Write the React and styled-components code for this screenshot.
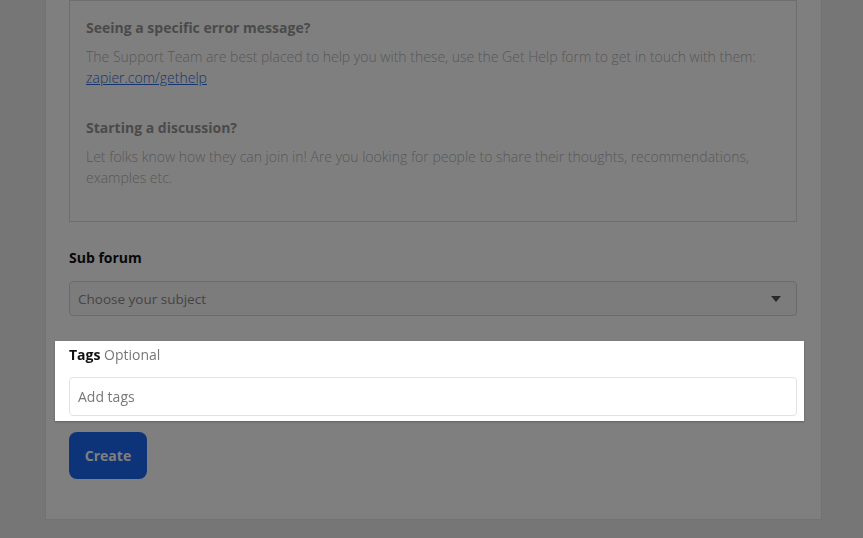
import React from 'react';
import styled, { createGlobalStyle } from 'styled-components';

const GlobalStyle = createGlobalStyle`
  html, body {
    margin: 0;
    padding: 0;
    background: #ececec;
    font-family: "Open Sans", "Liberation Sans", sans-serif;
    overflow: hidden;
  }
`;

const Page = styled.div`
  display: flex;
  padding: 0 41px 17px 45px;
`;

const Card = styled.div`
  flex: 1;
  display: flex;
  flex-direction: column;
  margin-top: -40px;
  padding: 39px 24px 40px 23px;
  background: #fff;
  border: 1px solid #e4e4e4;
`;

const InfoBox = styled.div`
  display: flex;
  flex-direction: column;
  gap: 29px;
  padding: 16px 16px 33px;
  border: 1px solid #dcdcdc;
`;

const InfoSection = styled.div`
  display: flex;
  flex-direction: column;
  gap: 8px;
`;

const InfoTitle = styled.h3`
  margin: 0;
  font-size: 14px;
  line-height: 21px;
  font-weight: 700;
  color: #959595;
`;

const InfoText = styled.p`
  margin: 0;
  font-size: 14px;
  line-height: 21px;
  font-weight: 300;
  color: #b0b0b0;
`;

const Link = styled.a`
  color: #2f6bd8;
  text-decoration: underline;
`;

const Field = styled.div`
  display: flex;
  flex-direction: column;
  gap: ${p => p.$gap || 13}px;
  margin-top: ${p => p.$top || 0}px;
`;

const Spotlight = styled(Field)`
  position: relative;
  z-index: 20;
  margin-left: -14px;
  margin-right: -7px;
  padding: 3px 7px 5px 14px;
  background: #fff;
  box-shadow: 0 1px 2px rgba(0, 0, 0, 0.25);
`;

const Label = styled.label`
  font-size: 14px;
  line-height: 21px;
  font-weight: 700;
  color: #111;
`;

const Hint = styled.span`
  font-weight: 400;
  color: #777;
`;

const Select = styled.div`
  display: flex;
  align-items: center;
  justify-content: space-between;
  height: 35px;
  box-sizing: border-box;
  padding: 0 15px 0 8px;
  border: 1px solid #d6d6d6;
  border-radius: 4px;
  background: #f8f8f8;
  font-size: 13.5px;
  color: #8a8a8a;
`;

const Caret = styled.span`
  width: 0;
  height: 0;
  border-left: 5px solid transparent;
  border-right: 5px solid transparent;
  border-top: 6px solid #555;
`;

const Input = styled.div`
  display: flex;
  align-items: center;
  height: 39px;
  box-sizing: border-box;
  padding: 0 8px;
  border: 1px solid #e2e2e2;
  border-radius: 4px;
  background: #fff;
  font-size: 14px;
  color: #777;
`;

const Button = styled.button`
  align-self: flex-start;
  margin-top: 11px;
  width: 78px;
  height: 47px;
  border: none;
  border-radius: 8px;
  background: #1a66f0;
  color: #fff;
  font-family: inherit;
  font-size: 14px;
  font-weight: 700;
`;

const Overlay = styled.div`
  position: fixed;
  inset: 0;
  z-index: 10;
  background: rgba(0, 0, 0, 0.5);
`;

export default function App() {
  return (
    <>
      <GlobalStyle />
      <Page>
        <Card>
          <InfoBox>
            <InfoSection>
              <InfoTitle>Seeing a specific error message?</InfoTitle>
              <InfoText>
                The Support Team are best placed to help you with these, use the Get Help form to get in touch with them:{' '}
                <Link href="#">zapier.com/gethelp</Link>
              </InfoText>
            </InfoSection>
            <InfoSection>
              <InfoTitle>Starting a discussion?</InfoTitle>
              <InfoText>
                Let folks know how they can join in! Are you looking for people to share their thoughts, recommendations, examples etc.
              </InfoText>
            </InfoSection>
          </InfoBox>

          <Field $top={25}>
            <Label>Sub forum</Label>
            <Select>
              Choose your subject
              <Caret />
            </Select>
          </Field>

          <Spotlight $top={25} $gap={12}>
            <Label>
              Tags <Hint>Optional</Hint>
            </Label>
            <Input>Add tags</Input>
          </Spotlight>

          <Button>Create</Button>
        </Card>
      </Page>
      <Overlay />
    </>
  );
}
